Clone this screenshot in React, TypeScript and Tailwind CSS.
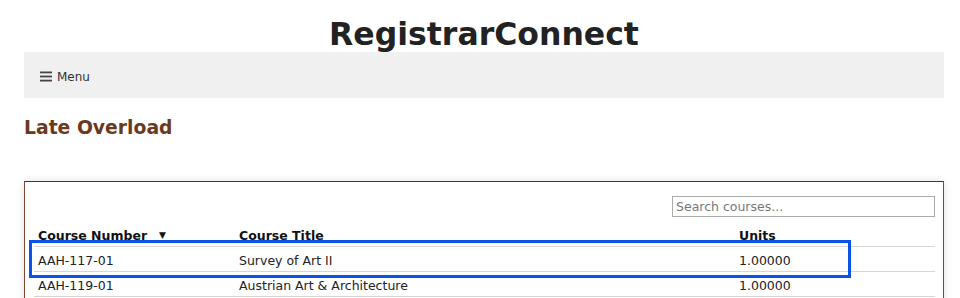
import React from 'react';

interface Course {
    number: string;
    title: string;
    units: string;
}

const courses: Course[] = [
    { number: 'AAH-117-01', title: 'Survey of Art II', units: '1.00000' },
    { number: 'AAH-119-01', title: 'Austrian Art & Architecture', units: '1.00000' },
];

const MenuIcon = () => (
    <svg width="12" height="11" viewBox="0 0 12 11" className="text-[#444]">
        <rect x="0" y="0.5" width="12" height="1.8" fill="currentColor" />
        <rect x="0" y="4.6" width="12" height="1.8" fill="currentColor" />
        <rect x="0" y="8.7" width="12" height="1.8" fill="currentColor" />
    </svg>
);

export default function App() {
    return (
        <div className="w-[960px] h-[298px] overflow-hidden bg-white text-[#222] font-['DejaVu_Sans',Verdana,sans-serif]">
            <div className="ml-[24px] mr-[16px] h-[52px] pt-[19px] text-center text-[31.5px] font-bold leading-none text-[#222]">
                RegistrarConnect
            </div>

            <div className="ml-[24px] mr-[16px] h-[46px] bg-[#f0f0f0] flex items-center pt-[3px] px-4 gap-[5px]">
                <MenuIcon />
                <span className="text-[12px] text-[#333]">Menu</span>
            </div>

            <h1 className="ml-[24px] mr-[16px] mt-[21px] text-[18.8px] font-bold leading-none text-[#6b3a1e]">
                Late Overload
            </h1>

            <div className="relative ml-[24px] mr-[16px] mt-[43px] border-t border-t-[#2b3a4e] border-x border-x-[#7a4a35] shadow-[0_0_8px_rgba(0,0,0,0.12)] pt-[14px] pl-[9px] pr-[8px] pb-4">
                <div className="flex justify-end">
                    <input
                        type="text"
                        placeholder="Search courses..."
                        className="w-[263px] h-[21px] border border-[#aaa] px-[3px] text-[12.5px] text-[#333] placeholder:text-[#777] outline-none"
                    />
                </div>

                <div className="mt-[7px] text-[12.5px]">
                    <div className="grid grid-cols-[201px_500px_1fr] h-[23px] pt-[2px] border-b border-[#d6d6d6] font-bold text-[#111] leading-[20px]">
                        <div className="pl-[4px] flex items-center">
                            Course Number
                            <span className="ml-[12px] text-[9px] leading-none">▼</span>
                        </div>
                        <div className="pl-[4px]">Course Title</div>
                        <div className="pl-[4px]">Units</div>
                    </div>
                    {courses.map(c => (
                        <div
                            key={c.number}
                            className="grid grid-cols-[201px_500px_1fr] h-[25px] pt-[3px] border-b border-[#d6d6d6] leading-[21px]"
                        >
                            <div className="pl-[4px]">{c.number}</div>
                            <div className="pl-[4px]">{c.title}</div>
                            <div className="pl-[4px]">{c.units}</div>
                        </div>
                    ))}
                </div>

                <div className="absolute left-[4px] top-[58px] w-[822px] h-[38px] border-[3px] border-[#0a52e8] pointer-events-none" />
            </div>
        </div>
    );
}
